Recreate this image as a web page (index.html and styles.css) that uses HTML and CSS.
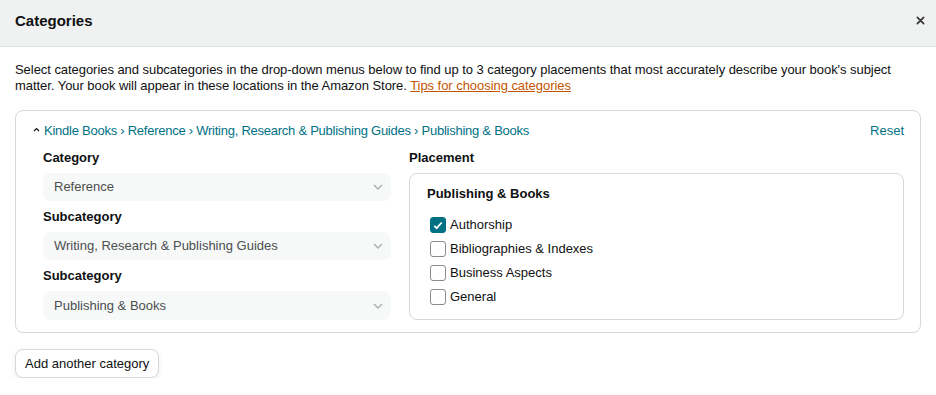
FILE: index.html
```html
<!DOCTYPE html>
<html lang="en">
<head>
    <meta charset="UTF-8">
    <meta name="viewport" content="width=device-width, initial-scale=1.0">
    <title>Categories</title>
    <link rel="stylesheet" href="styles.css">
</head>
<body>
    <header class="modal-header">
        <h1>Categories</h1>
        <button class="close-btn" aria-label="Close">
            <svg width="9" height="9" viewBox="0 0 10 10"><path d="M1.5 1.5l7 7M8.5 1.5l-7 7" stroke="#333" stroke-width="1.8" stroke-linecap="round"/></svg>
        </button>
    </header>

    <div class="modal-body">
        <p class="intro">
            Select categories and subcategories in the drop-down menus below to find up to 3 category placements that most accurately describe your book's subject matter. Your book will appear in these locations in the Amazon Store.
            <a href="#tips" class="tips-link">Tips for choosing categories</a>
        </p>

        <div class="category-card">
            <div class="card-top">
                <a href="#" class="breadcrumb">
                    <svg class="caret" width="7" height="5" viewBox="0 0 7 5"><path d="M1 4l2.5-2.5L6 4" fill="none" stroke="#0f1111" stroke-width="1.2"/></svg>
                    <span>Kindle Books › Reference › Writing, Research &amp; Publishing Guides › Publishing &amp; Books</span>
                </a>
                <a href="#" class="reset-link">Reset</a>
            </div>

            <div class="card-grid">
                <div class="selects">
                    <div class="field">
                        <label>Category</label>
                        <div class="select-box">
                            <span>Reference</span>
                            <svg width="10" height="6" viewBox="0 0 10 6"><path d="M1 1l4 4 4-4" fill="none" stroke="#aab0b0" stroke-width="1.4"/></svg>
                        </div>
                    </div>
                    <div class="field">
                        <label>Subcategory</label>
                        <div class="select-box">
                            <span>Writing, Research &amp; Publishing Guides</span>
                            <svg width="10" height="6" viewBox="0 0 10 6"><path d="M1 1l4 4 4-4" fill="none" stroke="#aab0b0" stroke-width="1.4"/></svg>
                        </div>
                    </div>
                    <div class="field">
                        <label>Subcategory</label>
                        <div class="select-box">
                            <span>Publishing &amp; Books</span>
                            <svg width="10" height="6" viewBox="0 0 10 6"><path d="M1 1l4 4 4-4" fill="none" stroke="#aab0b0" stroke-width="1.4"/></svg>
                        </div>
                    </div>
                </div>

                <div class="placement">
                    <label>Placement</label>
                    <div class="placement-box">
                        <h3>Publishing &amp; Books</h3>
                        <ul class="check-list">
                            <li>
                                <span class="checkbox checked">
                                    <svg width="10" height="9" viewBox="0 0 10 9"><path d="M1.3 4.8l2.4 2.4L8.7 1.5" fill="none" stroke="#fff" stroke-width="1.8"/></svg>
                                </span>
                                Authorship
                            </li>
                            <li><span class="checkbox"></span>Bibliographies &amp; Indexes</li>
                            <li><span class="checkbox"></span>Business Aspects</li>
                            <li><span class="checkbox"></span>General</li>
                        </ul>
                    </div>
                </div>
            </div>
        </div>

        <button class="add-btn">Add another category</button>
    </div>
</body>
</html>
```

FILE: styles.css
```css
/* Reset and base styles */
* {
    margin: 0;
    padding: 0;
    box-sizing: border-box;
}

body {
    font-family: "Liberation Sans", Arial, sans-serif;
    font-size: 13px;
    line-height: 18px;
    color: #0f1111;
    background: #fff;
}

a {
    color: #007185;
    text-decoration: none;
}

/* Header */
.modal-header {
    height: 47px;
    background: #f0f2f2;
    border-bottom: 1px solid #dfe3e3;
    display: flex;
    justify-content: space-between;
    align-items: center;
    padding: 0 8px 0 15px;
}

.modal-header h1 {
    font-size: 15px;
    font-weight: bold;
    margin-top: -5px;
}

.close-btn {
    background: none;
    border: none;
    width: 16px;
    height: 16px;
    display: flex;
    align-items: center;
    justify-content: center;
    margin-top: -6px;
    cursor: pointer;
}

/* Body */
.modal-body {
    padding: 15px 15px 0;
}

.intro {
    line-height: 16px;
    letter-spacing: -0.05px;
}

.tips-link {
    color: #c45500;
    text-decoration: underline;
}

/* Category card */
.category-card {
    margin-top: 16px;
    border: 1px solid #d5d9d9;
    border-radius: 8px;
    padding: 11px 16px 12px 17px;
}

.card-top {
    display: flex;
    justify-content: space-between;
    align-items: center;
}

.breadcrumb {
    display: flex;
    align-items: center;
    gap: 4px;
    letter-spacing: -0.25px;
}

.caret {
    margin-top: -3px;
}

.card-grid {
    display: grid;
    grid-template-columns: 348px 1fr;
    gap: 18px;
    margin: 9px 0 0 10px;
}

label {
    display: block;
    font-weight: bold;
    margin-bottom: 6px;
}

.field + .field {
    margin-top: 7px;
}

.select-box {
    height: 28px;
    background: #f7f8f8;
    border-radius: 8px;
    display: flex;
    align-items: center;
    justify-content: space-between;
    padding: 0 8px 0 11px;
    color: #4a4f4f;
}

.field:last-child .select-box {
    height: 29px;
}

/* Placement */
.placement-box {
    border: 1px solid #d5d9d9;
    border-radius: 8px;
    height: 147px;
    padding: 11px 17px;
}

.placement-box h3 {
    font-size: 13px;
}

.check-list {
    list-style: none;
    margin-top: 10px;
}

.check-list li {
    height: 24px;
    display: flex;
    align-items: center;
    gap: 4px;
    padding-left: 3px;
}

.checkbox {
    width: 16px;
    height: 16px;
    border: 1px solid #888c8c;
    border-radius: 3px;
    display: flex;
    align-items: center;
    justify-content: center;
    background: #fff;
}

.checkbox.checked {
    background: #007185;
    border-color: #007185;
}

/* Button */
.add-btn {
    margin-top: 16px;
    height: 29px;
    padding: 0 9px;
    font-family: inherit;
    font-size: 13px;
    color: #0f1111;
    background: #fff;
    border: 1px solid #d5d9d9;
    border-radius: 8px;
    box-shadow: 0 2px 5px rgba(213, 217, 217, 0.5);
    cursor: pointer;
}
```
